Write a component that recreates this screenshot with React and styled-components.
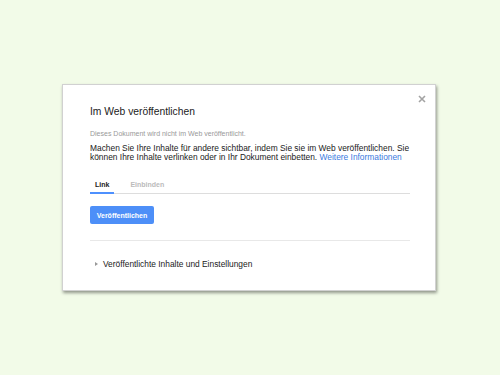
import styled, { createGlobalStyle } from "styled-components";

const GlobalStyle = createGlobalStyle`
    html, body {
        margin: 0;
        padding: 0;
        background: #f2fbe8;
    }

    body {
        font-family: "Liberation Sans", Arial, sans-serif;
        color: #222;
    }
`;

export default function App() {
    return (
        <Page>
            <GlobalStyle />
            <Dialog>
                <Close aria-label="Schließen">
                    <svg width="8" height="8" viewBox="0 0 8 8">
                        <path d="M1 1 L7 7 M7 1 L1 7" stroke="#a3a3a3" strokeWidth="1.6" />
                    </svg>
                </Close>

                <Title>Im Web veröffentlichen</Title>
                <Status>Dieses Dokument wird nicht im Web veröffentlicht.</Status>
                <Text>
                    Machen Sie Ihre Inhalte für andere sichtbar, indem Sie sie im Web veröffentlichen. Sie
                    <br />
                    können Ihre Inhalte verlinken oder in Ihr Dokument einbetten.{" "}
                    <MoreLink href="#">Weitere Informationen</MoreLink>
                </Text>

                <Tabs>
                    <Tab $active>Link</Tab>
                    <Tab>Einbinden</Tab>
                </Tabs>

                <Button>Veröffentlichen</Button>

                <Divider />

                <Expander>
                    <Arrow />
                    Veröffentlichte Inhalte und Einstellungen
                </Expander>
            </Dialog>
        </Page>
    );
}

const Page = styled.div`
    width: 500px;
    height: 375px;
    padding: 84px 0 0 62px;
    box-sizing: border-box;
`;

const Dialog = styled.div`
    position: relative;
    width: 374px;
    height: 207px;
    box-sizing: border-box;
    padding: 20px 25px 0 27px;
    background: #fff;
    border: 1px solid rgba(0, 0, 0, 0.18);
    box-shadow: 1px 2px 3px rgba(0, 0, 0, 0.4);
`;

const Close = styled.div`
    position: absolute;
    top: 10px;
    right: 9px;
    display: flex;
`;

const Title = styled.h2`
    margin: 0;
    font-size: 10.3px;
    font-weight: normal;
    line-height: 14px;
    color: #222;
`;

const Status = styled.div`
    margin-top: 10px;
    font-size: 7px;
    line-height: 9px;
    color: #999;
`;

const Text = styled.p`
    margin: 5.5px 0 0;
    font-size: 8.4px;
    line-height: 9px;
    color: #1a1a1a;
    white-space: nowrap;
`;

const MoreLink = styled.a`
    color: #3b7be0;
    text-decoration: none;
`;

const Tabs = styled.div`
    display: flex;
    gap: 11px;
    margin-top: 15.5px;
    border-bottom: 1px solid #ddd;
`;

const Tab = styled.div`
    padding: 3px 5px 3px;
    margin-bottom: -1px;
    font-size: 7px;
    line-height: 9px;
    font-weight: bold;
    color: ${(p) => (p.$active ? "#222" : "#bbb")};
    border-bottom: 2px solid ${(p) => (p.$active ? "#4d90fe" : "transparent")};
`;

const Button = styled.button`
    display: block;
    margin-top: 12px;
    width: 64px;
    height: 18px;
    padding: 0;
    border: none;
    border-radius: 2px;
    background: #4d8ff8;
    color: #fff;
    font-family: inherit;
    font-size: 7px;
    font-weight: bold;
`;

const Divider = styled.div`
    margin-top: 16px;
    border-top: 1px solid #e8e8e8;
`;

const Expander = styled.div`
    display: flex;
    align-items: center;
    gap: 5px;
    margin-top: 18px;
    padding-left: 5px;
    font-size: 8.4px;
    line-height: 10px;
    color: #1a1a1a;
`;

const Arrow = styled.span`
    width: 0;
    height: 0;
    border-top: 2px solid transparent;
    border-bottom: 2px solid transparent;
    border-left: 3px solid #999;
`;
